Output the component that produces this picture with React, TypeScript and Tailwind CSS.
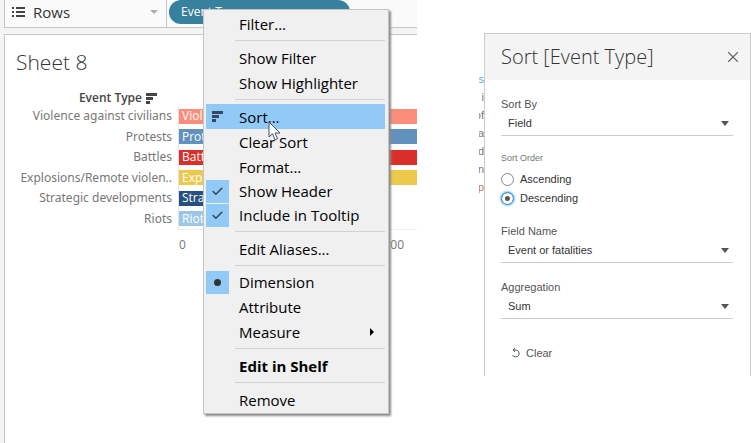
import { Check, X } from "lucide-react";

const tableau = "font-['Open_Sans',sans-serif]";

type Bar = { name: string; fill: string; width: string };

const bars: Bar[] = [
  { name: "Violence against civilians", fill: "bg-[#fc8d7a]", width: "w-full" },
  { name: "Protests", fill: "bg-[#6192be]", width: "w-full" },
  { name: "Battles", fill: "bg-[#d92f28]", width: "w-full" },
  { name: "Explosions/Remote violen..", fill: "bg-[#ecc94b]", width: "w-full" },
  { name: "Strategic developments", fill: "bg-[#26507f]", width: "w-3/5" },
  { name: "Riots", fill: "bg-[#9ac7e6]", width: "w-2/5" },
];

function SortBars({ className }: { className: string }) {
  return (
    <svg className={className} viewBox="0 0 12 11" fill="currentColor" aria-hidden="true">
      <rect x="0" y="0" width="11" height="3" />
      <rect x="0" y="4" width="7" height="3" />
      <rect x="0" y="8" width="4" height="3" />
    </svg>
  );
}

function Shelf() {
  return (
    <div className="flex h-7 border-b border-l border-[#c6c6c6] bg-[#fafafa]">
      <div className="flex w-[162px] items-center border-r border-[#c6c6c6] pr-2 pb-1 pl-[7px] text-[#333]">
        <svg className="h-3 w-[13px]" viewBox="0 0 13 12" fill="#444" aria-hidden="true">
          <path d="M0 1h2v2H0zM4 1h9v2H4zM0 5h2v2H0zM4 5h9v2H4zM0 9h2v2H0zM4 9h9v2H4z" />
        </svg>
        <span className="ml-2 flex-1 text-[15px] leading-5">Rows</span>
        <svg className="h-1 w-2" viewBox="0 0 8 4" fill="#aaa" aria-hidden="true">
          <path d="M0 0h8L4 4z" />
        </svg>
      </div>
      <button className="ml-[2px] h-6 w-[181px] rounded-full bg-[#37809e] px-3 text-left text-xs text-white">
        Event Type
      </button>
    </div>
  );
}

function Sheet() {
  return (
    <div className="mt-[6px] flex-1 border-t border-l border-[#c6c6c6] bg-white">
      <h1 className="mt-[13px] ml-[11px] text-[21px] leading-7 font-light text-[#333]">Sheet 8</h1>
      <div className="mt-[14px] flex w-[153px] items-center justify-end gap-1 text-xs leading-4 font-semibold text-[#444]">
        Event Type
        <SortBars className="h-[11px] w-3" />
      </div>
      <div className="grid h-[123px] auto-rows-fr">
        {bars.map((b) => (
          <div key={b.name} className="flex items-center">
            <span className="w-[167px] text-right font-['Noto_Sans',sans-serif] text-xs leading-4 text-[#777]">{b.name}</span>
            <div className="ml-[6px] flex h-full flex-1 items-center border-l border-[#e4e4e4]">
              <div className={`flex h-[15px] items-center overflow-hidden pl-[3px] text-xs whitespace-nowrap text-white ${b.fill} ${b.width}`}>
                {b.name}
              </div>
            </div>
          </div>
        ))}
      </div>
      <div className="ml-[173px] flex h-6 items-end justify-between border-t border-[#eee] pr-[13px] pl-px text-xs leading-4 text-[#777]">
        <span>0</span>
        <span>200</span>
      </div>
    </div>
  );
}

type ItemProps = { label: string; mark?: "check" | "dot"; active?: boolean; bold?: boolean; sub?: boolean };

function Item({ label, mark, active, bold, sub }: ItemProps) {
  return (
    <button
      role="menuitem"
      className={`flex w-full items-center text-left ${mark ? "h-6" : "h-[25px]"} ${active ? "bg-[#91c9f7]" : ""} ${bold ? "font-bold" : ""}`}
    >
      <span className={`flex h-[23px] w-[23px] items-center justify-center text-[#34495e] ${mark ? "bg-[#91c9f7]" : ""}`}>
        {mark === "check" && <Check size={13} strokeWidth={3} />}
        {mark === "dot" && <span className="h-[7px] w-[7px] rounded-full bg-[#333]" />}
        {active && <SortBars className="h-[11px] w-3" />}
      </span>
      <span className="ml-[10px] flex-1">{label}</span>
      {sub && (
        <svg className="mr-[11px] h-2 w-1" viewBox="0 0 4 8" aria-hidden="true">
          <path d="M0 0l4 4-4 4z" />
        </svg>
      )}
    </button>
  );
}

function Rule() {
  return <div role="separator" className="my-1 ml-[29px] h-px bg-[#d2d2d2]" />;
}

function ContextMenu() {
  return (
    <div
      role="menu"
      className={`absolute top-[9px] left-[203px] w-[186px] border border-[#c4c4c4] bg-[#f0f0f0] pt-px pr-[3px] pb-px pl-[2px] text-[15px] leading-5 text-black shadow-[2px_2px_2px_#8c8c8c] ${tableau}`}
    >
      <Item label="Filter..." />
      <Rule />
      <Item label="Show Filter" />
      <Item label="Show Highlighter" />
      <Rule />
      <Item label="Sort..." active />
      <Item label="Clear Sort" />
      <Item label="Format..." />
      <Item label="Show Header" mark="check" />
      <Item label="Include in Tooltip" mark="check" />
      <Rule />
      <Item label="Edit Aliases..." />
      <Rule />
      <Item label="Dimension" mark="dot" />
      <Item label="Attribute" />
      <Item label="Measure" sub />
      <Rule />
      <Item label="Edit in Shelf" bold />
      <Rule />
      <Item label="Remove" />
      <svg className="absolute top-[111px] left-16 h-5 w-[14px]" viewBox="0 0 14 20" aria-hidden="true">
        <path d="M1 1v15l3.500-3.300 2.500 6 2.500-1-2.500-5.700h5z" fill="#fff" stroke="#44506a" />
      </svg>
    </div>
  );
}

function Field({ id, label, value }: { id: string; label: string; value: string }) {
  return (
    <div className="flex flex-col">
      <label htmlFor={id} className="h-4 leading-4 text-[#555]">
        {label}
      </label>
      <div className="flex h-6 items-center border-b border-[#ccc] pr-1">
        <select id={id} className="h-5 flex-1 appearance-none bg-transparent pl-[7px] text-[#333] outline-none">
          <option>{value}</option>
        </select>
        <svg className="pointer-events-none h-[5px] w-2" viewBox="0 0 8 5" fill="#555" aria-hidden="true">
          <path d="M0 0h8L4 5z" />
        </svg>
      </div>
    </div>
  );
}

function SortDialog() {
  return (
    <section
      role="dialog"
      aria-label="Sort"
      className="mt-[33px] flex h-[343px] flex-1 flex-col border-x border-t border-[#ccc] bg-white font-['Liberation_Sans',Arial,sans-serif] text-[11px]"
    >
      <header className="flex h-[46px] items-center justify-between bg-[#f4f4f4] pr-2 pl-4">
        <h2 className={`text-xl leading-6 font-light text-[#333] ${tableau}`}>Sort [Event Type]</h2>
        <button aria-label="Close">
          <X size={18} strokeWidth={1.500} color="#666" />
        </button>
      </header>
      <div className="flex flex-col pt-4 pr-[17px] pl-4">
        <Field id="sort-by" label="Sort By" value="Field" />
        <fieldset className="mt-4">
          <legend className="text-[9px] leading-3 text-[#777]">Sort Order</legend>
          <div className="mt-[6px] flex flex-col text-[#333]">
            {["Ascending", "Descending"].map((o) => (
              <label key={o} className="flex h-[19px] items-center gap-[6px]">
                <input
                  type="radio"
                  name="order"
                  defaultChecked={o === "Descending"}
                  className="h-[13px] w-[13px] appearance-none rounded-full border border-[#888] bg-white checked:border-[#4a9fdc] checked:bg-[#555] checked:shadow-[inset_0_0_0_3px_#fff,0_0_2px_1px_#8cc8f0]"
                />
                {o}
              </label>
            ))}
          </div>
        </fieldset>
        <div className="mt-[15px] flex flex-col gap-4">
          <Field id="field-name" label="Field Name" value="Event or fatalities" />
          <Field id="aggregation" label="Aggregation" value="Sum" />
        </div>
        <button className="mt-6 ml-[10px] flex h-5 items-center gap-[5px] self-start text-[#555]">
          <svg className="h-[10px] w-[10px]" viewBox="0 0 10 10" fill="none" stroke="#555" aria-hidden="true">
            <path d="M2 2h3a3.500 3.500 0 1 1-3.500 5M4 0L2 2l2 2" />
          </svg>
          Clear
        </button>
      </div>
    </section>
  );
}

const snippets = ["s", "i", "of", "a", "d", "n", "p"];

export default function App() {
  return (
    <main className="relative grid min-h-screen grid-cols-[417fr_334fr] overflow-hidden bg-white">
      <div className={`flex flex-col bg-[#f4f4f4] pl-1 ${tableau}`}>
        <Shelf />
        <Sheet />
      </div>
      <ContextMenu />
      <div className="flex items-start pl-[62px]">
        <div className="mt-[70px] w-[5px] overflow-hidden text-[11px] text-[#777]" aria-hidden="true">
          {snippets.map((s) => (
            <div key={s} className="flex h-[18px] items-center justify-end font-['Liberation_Sans',Arial,sans-serif] first:text-[#5aa9e0] last:text-[#c07a50]">
              {s}
            </div>
          ))}
        </div>
        <SortDialog />
      </div>
    </main>
  );
}
